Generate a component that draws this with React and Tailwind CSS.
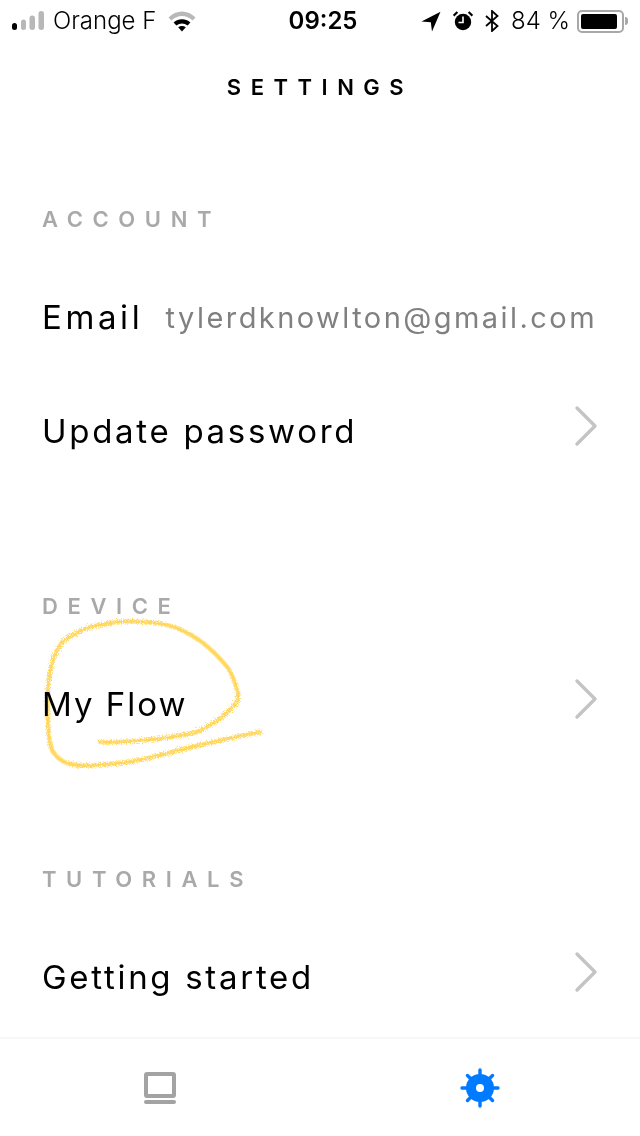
import { Fragment } from "react"

function Chevron() {
    return (
        <svg width="24" height="42" viewBox="0 0 24 42" fill="none" className="mb-[10px] mr-[-1px] shrink-0">
            <path d="M3 3 L21 21 L3 39" stroke="#c4c4c4" strokeWidth="3.4" strokeLinecap="round" strokeLinejoin="round" />
        </svg>
    )
}

function Signal() {
    return (
        <svg width="33" height="20" viewBox="0 0 33 20" className="shrink-0">
            <rect x="0" y="12" width="5" height="7" rx="2.5" fill="#000" />
            <rect x="9" y="8.5" width="5" height="10.5" rx="2.5" fill="#b8b8b8" />
            <rect x="17.5" y="4.5" width="5.5" height="14.5" rx="2.7" fill="#b8b8b8" />
            <rect x="26.5" y="0" width="5.5" height="19" rx="2.7" fill="#b8b8b8" />
        </svg>
    )
}

function Wifi() {
    return (
        <svg width="28" height="21" viewBox="0 0 28 21" className="shrink-0">
            <path d="M0.5 6.5 C8 -1.5 20 -1.5 27.5 6.5 L24.6 9.6 C18.5 3.6 9.5 3.6 3.4 9.6 Z" fill="#b8b8b8" />
            <path d="M5.6 11.6 C10.5 7.2 17.5 7.2 22.4 11.6 L19.6 14.6 C16.2 11.8 11.8 11.8 8.4 14.6 Z" fill="#000" />
            <path d="M10.2 16.2 C12.6 14.6 15.4 14.6 17.8 16.2 L14 20.5 Z" fill="#000" />
        </svg>
    )
}

function StatusRight() {
    return (
        <div className="flex items-center justify-end">
            <svg width="20" height="21" viewBox="0 0 20 21" className="shrink-0">
                <path d="M0.5 10.5 L19.5 0.8 L11 20.5 L9.8 11.2 Z" fill="#000" />
            </svg>
            <svg width="20" height="20" viewBox="0 0 20 20" className="ml-3 shrink-0">
                <circle cx="10" cy="11" r="8.2" fill="#000" />
                <path d="M10 5.5 V11.5 H5.5" stroke="#fff" strokeWidth="1.6" fill="none" />
                <path d="M0.6 4.6 L4.4 1 M19.4 4.6 L15.6 1" stroke="#000" strokeWidth="2.2" />
            </svg>
            <svg width="14" height="22" viewBox="0 0 14 22" className="ml-3 shrink-0">
                <path d="M1 6 L12.5 16 L7 21 V1 L12.5 6 L1 16" stroke="#000" strokeWidth="1.8" fill="none" />
            </svg>
            <span className="ml-[12px] text-[24px] font-light">84 %</span>
            <div className="ml-[7px] flex items-center">
                <div className="flex h-[23px] w-[47px] rounded-[5px] border-2 border-[#a8a8a8] p-[2px] pr-[5px]">
                    <div className="h-full w-full rounded-[2px] bg-black" />
                </div>
                <div className="ml-[1px] h-[8px] w-[3px] rounded-r-sm bg-[#a8a8a8]" />
            </div>
        </div>
    )
}

function Row({ label, value, arrow, tracking }) {
    return (
        <div className="flex h-[114px] items-center justify-between pl-[42px] pr-[43px]">
            <span className={`text-[33px] leading-none text-black ${tracking}`}>{label}</span>
            {value && <span className="text-[29px] leading-none tracking-[2.45px] text-[#808080]">{value}</span>}
            {arrow && <Chevron />}
        </div>
    )
}

function Scribble() {
    const d = "M100 742 C118 743 133 741 147 740 C165 738 182 736 197 732 C210 726 222 718 230 710 C236 704 239 700 238 694 C236 684 233 676 228 668 C220 658 212 650 203 643 C194 636 186 632 177 628 C166 624 155 622 143 622 C134 621 126 621 117 622 C106 624 96 625 87 628 C78 632 70 636 63 641 C58 648 55 654 53 660 C50 668 49 678 48 687 C47 698 47 709 48 720 C48 732 49 742 52 750 C56 757 61 761 67 763 C77 766 87 766 97 765 C112 764 126 763 140 760 C152 757 162 755 173 752 C187 748 200 745 213 742 C230 738 245 735 260 732"
    return (
        <svg width="640" height="1136" viewBox="0 0 640 1136" fill="none" className="pointer-events-none absolute left-0 top-0 mix-blend-multiply">
            <defs>
                <filter id="rough" x="0" y="0" width="100%" height="100%" filterUnits="userSpaceOnUse">
                    <feTurbulence type="fractalNoise" baseFrequency="0.8" numOctaves="2" seed="4" />
                    <feDisplacementMap in="SourceGraphic" scale="6" />
                </filter>
            </defs>
            <g filter="url(#rough)" strokeLinecap="round" strokeLinejoin="round">
                <path d={d} stroke="#ffe9a6" strokeWidth="5" />
                <path d={d} stroke="#ffd75e" strokeWidth="3" strokeDasharray="2 2" />
            </g>
        </svg>
    )
}

export default function App() {
    const sections = [
        {
            title: "ACCOUNT",
            rows: [
                { label: "Email", value: "tylerdknowlton@gmail.com", tracking: "tracking-[3.6px]" },
                { label: "Update password", arrow: true, tracking: "tracking-[2.7px]" },
            ],
        },
        { title: "DEVICE", rows: [{ label: "My Flow", arrow: true, tracking: "tracking-[2px]" }] },
        { title: "TUTORIALS", rows: [{ label: "Getting started", arrow: true, tracking: "tracking-[2.7px]" }] },
    ]

    return (
        <div className="relative flex h-[1136px] w-[640px] flex-col overflow-hidden bg-white font-['Inter',sans-serif] text-black">
            <div className="grid h-[42px] grid-cols-[1fr_auto_1fr] items-center pl-3 pr-3">
                <div className="flex items-center">
                    <Signal />
                    <span className="ml-[8px] text-[24px] font-light">Orange F</span>
                    <div className="ml-3"><Wifi /></div>
                </div>
                <span className="ml-[6px] text-[24px] font-semibold">09:25</span>
                <StatusRight />
            </div>

            <h1 className="flex h-[90px] items-center justify-center text-[22px] font-semibold tracking-[9.5px]">SETTINGS</h1>

            <div className="mt-[76px] flex flex-col gap-[107px]">
                {sections.map((section) => (
                    <Fragment key={section.title}>
                        <section>
                            <h2 className="mb-[28px] h-[24px] pl-[42px] text-[22px] font-semibold leading-[22px] tracking-[9.6px] text-[#a9a9a9]">{section.title}</h2>
                            {section.rows.map((row) => (
                                <Row key={row.label} {...row} />
                            ))}
                        </section>
                    </Fragment>
                ))}
            </div>

            <div className="mt-auto flex h-[99px] items-center border-t-2 border-[#f7f7f7]">
                <div className="flex flex-1 justify-center pr-[1px]">
                    <svg width="32" height="32" viewBox="0 0 32 32">
                        <rect x="2" y="2" width="28" height="22" rx="1" fill="none" stroke="#a3a3a3" strokeWidth="4" />
                        <rect x="0" y="28" width="32" height="4" rx="2" fill="#a3a3a3" />
                    </svg>
                </div>
                <div className="flex flex-1 justify-center">
                    <svg width="40" height="40" viewBox="0 0 40 40">
                        <g stroke="#007aff" strokeWidth="3.4" strokeLinecap="round">
                            <path d="M20 2 V38 M2 20 H38 M7.5 7.5 L32.5 32.5 M32.5 7.5 L7.5 32.5" />
                        </g>
                        <circle cx="20" cy="20" r="14" fill="#007aff" />
                        <circle cx="20" cy="20" r="4" fill="#fff" />
                    </svg>
                </div>
            </div>

            <Scribble />
        </div>
    )
}
